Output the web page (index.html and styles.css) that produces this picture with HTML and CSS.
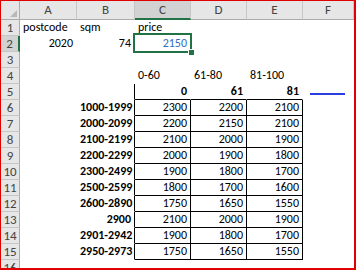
FILE: index.html
```html
<!DOCTYPE html>
<html lang="en">
<head>
    <meta charset="UTF-8">
    <title>Price table</title>
    <link rel="stylesheet" href="styles.css">
</head>
<body>
    <div class="frame">
        <div class="sheet">
            <!-- column headers -->
            <div class="corner"></div>
            <div class="hd">A</div>
            <div class="hd">B</div>
            <div class="hd active">C</div>
            <div class="hd">D</div>
            <div class="hd">E</div>
            <div class="hd">F</div>

            <!-- row 1 -->
            <div class="rn">1</div>
            <div class="c">postcode</div>
            <div class="c">sqm</div>
            <div class="c">price</div>
            <div class="c"></div><div class="c"></div><div class="c"></div>

            <!-- row 2 -->
            <div class="rn active">2</div>
            <div class="c num">2020</div>
            <div class="c num">74</div>
            <div class="c num input">2150<span class="sel"><span class="handle"></span></span></div>
            <div class="c"></div><div class="c"></div><div class="c"></div>

            <!-- row 3 -->
            <div class="rn">3</div>
            <div class="c"></div><div class="c"></div><div class="c"></div>
            <div class="c"></div><div class="c"></div><div class="c"></div>

            <!-- row 4: sqm ranges -->
            <div class="rn">4</div>
            <div class="c"></div><div class="c"></div>
            <div class="c">0-60</div>
            <div class="c">61-80</div>
            <div class="c">81-100</div>
            <div class="c"></div>

            <!-- row 5: lookup keys -->
            <div class="rn">5</div>
            <div class="c"></div>
            <div class="c edge"></div>
            <div class="c num bold under">0</div>
            <div class="c num bold under">61</div>
            <div class="c num bold under">81</div>
            <div class="c line-cell"><span class="line"></span></div>

            <div class="rn">6</div>
            <div class="c"></div>
            <div class="c num bold edge">1000-1999</div>
            <div class="c num box">2300</div>
            <div class="c num box">2200</div>
            <div class="c num box">2100</div>
            <div class="c"></div>

            <div class="rn">7</div>
            <div class="c"></div>
            <div class="c num bold edge">2000-2099</div>
            <div class="c num box">2200</div>
            <div class="c num box">2150</div>
            <div class="c num box">2100</div>
            <div class="c"></div>

            <div class="rn">8</div>
            <div class="c"></div>
            <div class="c num bold edge">2100-2199</div>
            <div class="c num box">2100</div>
            <div class="c num box">2000</div>
            <div class="c num box">1900</div>
            <div class="c"></div>

            <div class="rn">9</div>
            <div class="c"></div>
            <div class="c num bold edge">2200-2299</div>
            <div class="c num box">2000</div>
            <div class="c num box">1900</div>
            <div class="c num box">1800</div>
            <div class="c"></div>

            <div class="rn">10</div>
            <div class="c"></div>
            <div class="c num bold edge">2300-2499</div>
            <div class="c num box">1900</div>
            <div class="c num box">1800</div>
            <div class="c num box">1700</div>
            <div class="c"></div>

            <div class="rn">11</div>
            <div class="c"></div>
            <div class="c num bold edge">2500-2599</div>
            <div class="c num box">1800</div>
            <div class="c num box">1700</div>
            <div class="c num box">1600</div>
            <div class="c"></div>

            <div class="rn">12</div>
            <div class="c"></div>
            <div class="c num bold edge">2600-2890</div>
            <div class="c num box">1750</div>
            <div class="c num box">1650</div>
            <div class="c num box">1550</div>
            <div class="c"></div>

            <div class="rn">13</div>
            <div class="c"></div>
            <div class="c num bold edge">2900</div>
            <div class="c num box">2100</div>
            <div class="c num box">2000</div>
            <div class="c num box">1900</div>
            <div class="c"></div>

            <div class="rn">14</div>
            <div class="c"></div>
            <div class="c num bold edge">2901-2942</div>
            <div class="c num box">1900</div>
            <div class="c num box">1800</div>
            <div class="c num box">1700</div>
            <div class="c"></div>

            <div class="rn">15</div>
            <div class="c"></div>
            <div class="c num bold edge">2950-2973</div>
            <div class="c num box">1750</div>
            <div class="c num box">1650</div>
            <div class="c num box">1550</div>
            <div class="c"></div>

            <div class="rn">16</div>
            <div class="c"></div><div class="c"></div><div class="c"></div>
            <div class="c"></div><div class="c"></div><div class="c"></div>
        </div>
    </div>
</body>
</html>
```

FILE: styles.css
```css
/* Global styles */
body {
    margin: 0;
    padding: 0;
    background-color: #fff;
    font-family: Calibri, Carlito, Lato, sans-serif;
    font-size: 12px;
    color: #000;
}

/* red outline round the sheet */
.frame {
    width: 356px;
    height: 270px;
    box-sizing: border-box;
    border-style: solid;
    border-color: #e00000;
    border-width: 1px 2px 2px 1px;
    overflow: hidden;
}

.sheet {
    position: relative;
    display: grid;
    grid-template-columns: 19px 57px 58px 56px 56px 56px 51px;
    grid-template-rows: 19px;
    grid-auto-rows: 16px;
}

/* Header styles */
.corner,
.hd,
.rn {
    box-sizing: border-box;
    background-color: #e6e6e6;
    color: #444;
    text-align: center;
    border-right: 1px solid #c6c6c6;
    border-bottom: 1px solid #c6c6c6;
}

.corner {
    position: relative;
    border-right-color: #ababab;
    border-bottom-color: #ababab;
}

/* little grey triangle in the corner */
.corner::after {
    content: "";
    position: absolute;
    right: 2px;
    bottom: 2px;
    border-left: 7px solid transparent;
    border-bottom: 7px solid #b9b9b9;
}

.hd {
    line-height: 18px;
    font-size: 13px;
    border-bottom-color: #ababab;
}

.rn {
    line-height: 15px;
    font-size: 13px;
    border-right-color: #ababab;
}

.hd.active {
    background-color: #d2d2d2;
    border-bottom: 2px solid #217346;
    line-height: 17px;
}

.rn.active {
    background-color: #d2d2d2;
    border-right: 2px solid #217346;
}

/* Cell styles */
.c {
    box-sizing: border-box;
    padding: 0 3px;
    line-height: 15px;
    white-space: nowrap;
    border-right: 1px solid transparent;
    border-bottom: 1px solid transparent;
}

.num {
    text-align: right;
}

.bold {
    font-weight: bold;
}

.input {
    position: relative;
    color: #2f6fc0;
}

/* selected cell outline + fill handle */
.sel {
    position: absolute;
    left: -2px;
    top: -3px;
    right: -2px;
    bottom: -2px;
    border: 2px solid #217346;
}

.handle {
    position: absolute;
    right: -4px;
    bottom: -4px;
    width: 5px;
    height: 5px;
    background-color: #217346;
    border-left: 1px solid #fff;
    border-top: 1px solid #fff;
}

/* price table borders */
.under {
    border-bottom-color: #000;
}

.edge {
    border-right-color: #000;
}

.box {
    border-right-color: #000;
    border-bottom-color: #000;
}

.line-cell {
    position: relative;
}

/* drawn line shape sitting over column F */
.line {
    position: absolute;
    left: 7px;
    top: 9px;
    width: 35px;
    height: 2px;
    background-color: #2b3fe0;
}
```
